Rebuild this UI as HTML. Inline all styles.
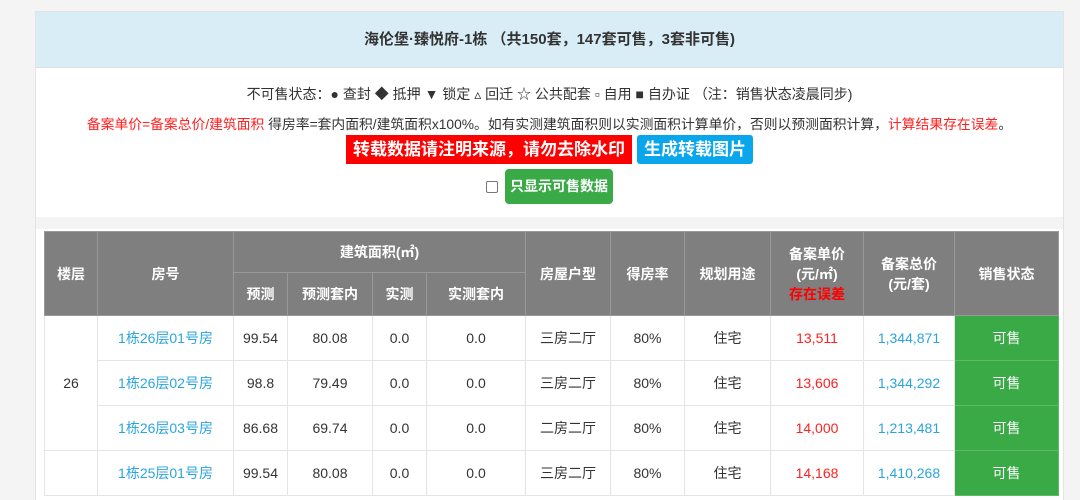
<!DOCTYPE html><html style="overflow:hidden;height:500px"><head><meta charset="utf-8"><style>
body{margin:0;width:1080px;height:500px;overflow:hidden;background:#f4f4f4;font-family:"Liberation Sans","Noto Sans CJK SC",sans-serif;color:#333;position:relative}
.panel{position:absolute;left:35px;top:11px;width:1027px;height:489px;background:#fff;border:1px solid #e3e3e3;border-bottom:0;overflow:hidden}
.hd{height:55px;background:#d9edf7;border-bottom:1px solid #e0e0e0;text-align:center;line-height:55px;font-weight:bold;font-size:15px;color:#333}
.l{text-align:center;font-size:14px;position:absolute;left:0;width:1027px}
.red{color:#f22}
.gap{position:absolute;left:0;top:205px;width:1027px;height:12px;background:#f4f4f4;}
table{position:absolute;left:8px;top:219px;border-collapse:collapse;font-size:14px;table-layout:fixed}
th{background:#7f7f7f;color:#fff;font-weight:bold;border:1px solid #999;padding:0}
td{border:1px solid #e4e4e4;text-align:center;padding:0;height:44px}
.b{color:#2aa5dc}.r{color:#f22}.g{background:#3aaa47;color:#fff;border-color:#5cbb66}
</style></head><body>
<div class="panel">
<div class="hd">海伦堡·臻悦府-1栋 （共150套，147套可售，3套非可售)</div>
<div class="l" style="top:72px">不可售状态：● 查封 ◆ 抵押 ▼ 锁定 ▵ 回迁 ☆ 公共配套 ▫ 自用 ■ 自办证 （注：销售状态凌晨同步)</div>
<div class="l" style="top:101px;font-size:13.8px"><span class="red">备案单价=备案总价/建筑面积</span> 得房率=套内面积/建筑面积x100%。如有实测建筑面积则以实测面积计算单价，否则以预测面积计算，<span class="red">计算结果存在误差</span>。</div>
<div style="position:absolute;left:310px;top:123px;width:286px;height:29px;background:#f00;color:#fff;font-weight:bold;font-size:17px;line-height:29px;text-align:center">转载数据请注明来源，请勿去除水印</div>
<div style="position:absolute;left:601px;top:123px;width:116px;height:29px;background:#0aa6ec;color:#fff;font-weight:bold;font-size:17px;line-height:29px;text-align:center;border-radius:3px">生成转载图片</div>
<div style="position:absolute;left:450px;top:169px;width:10px;height:10px;border:1px solid #777;border-radius:2px"></div>
<div style="position:absolute;left:469px;top:157px;width:108px;height:35px;background:#3aaa47;color:#fff;font-weight:bold;font-size:14px;line-height:35px;text-align:center;border-radius:4px">只显示可售数据</div>
<div class="gap"></div>
<table>
<colgroup><col width="53"><col width="136"><col width="54"><col width="85"><col width="54"><col width="99"><col width="85"><col width="74"><col width="86"><col width="93"><col width="91"><col width="104"></colgroup>
<tr style="height:41px"><th rowspan="2">楼层</th><th rowspan="2">房号</th><th colspan="4">建筑面积(㎡)</th><th rowspan="2">房屋户型</th><th rowspan="2">得房率</th><th rowspan="2">规划用途</th><th rowspan="2">备案单价<br>(元/㎡)<br><span style="color:#f00">存在误差</span></th><th rowspan="2">备案总价<br>(元/套)</th><th rowspan="2">销售状态</th></tr>
<tr style="height:43px"><th>预测</th><th>预测套内</th><th>实测</th><th>实测套内</th></tr>
<tr><td rowspan="3">26</td><td class="b">1栋26层01号房</td><td>99.54</td><td>80.08</td><td>0.0</td><td>0.0</td><td>三房二厅</td><td>80%</td><td>住宅</td><td class="r">13,511</td><td class="b">1,344,871</td><td class="g">可售</td></tr>
<tr><td class="b">1栋26层02号房</td><td>98.8</td><td>79.49</td><td>0.0</td><td>0.0</td><td>三房二厅</td><td>80%</td><td>住宅</td><td class="r">13,606</td><td class="b">1,344,292</td><td class="g">可售</td></tr>
<tr><td class="b">1栋26层03号房</td><td>86.68</td><td>69.74</td><td>0.0</td><td>0.0</td><td>二房二厅</td><td>80%</td><td>住宅</td><td class="r">14,000</td><td class="b">1,213,481</td><td class="g">可售</td></tr>
<tr><td></td><td class="b">1栋25层01号房</td><td>99.54</td><td>80.08</td><td>0.0</td><td>0.0</td><td>三房二厅</td><td>80%</td><td>住宅</td><td class="r">14,168</td><td class="b">1,410,268</td><td class="g">可售</td></tr>
</table>
</div>
</body></html>
